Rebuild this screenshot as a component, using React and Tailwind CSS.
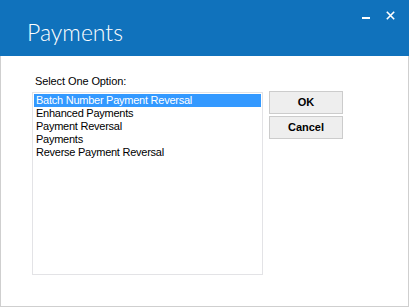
import React from "react";

const items = [
  "Batch Number Payment Reversal",
  "Enhanced Payments",
  "Payment Reversal",
  "Payments",
  "Reverse Payment Reversal",
];

export default function App() {
  return (
    <div className="w-[409px] h-[307px] bg-white flex flex-col" style={{ fontFamily: '"Liberation Sans", Arial, sans-serif' }}>
      <div className="h-[56px] bg-[#1072bc] relative shrink-0">
        <div
          className="absolute left-[27px] top-[17px] text-white text-[23px] leading-[30px] font-light"
          style={{ fontFamily: 'Lato, "Open Sans", sans-serif' }}
        >
          Payments
        </div>
        <div className="absolute left-[362px] top-[17px] w-[8px] h-[2px] bg-white" />
        <svg className="absolute left-[386px] top-[11px]" width="9" height="9" viewBox="0 0 9 9">
          <path d="M0.8 0.8 L8.2 8.2 M8.2 0.8 L0.8 8.2" stroke="white" strokeWidth="1.6" />
        </svg>
      </div>
      <div className="flex-1 border-l border-r border-b border-[#cfcfcf] relative">
        <div className="pl-[34px] pt-[19px] text-[11px] leading-[13px] text-black tracking-[-0.1px]">Select One Option:</div>
        <div className="flex pl-[31px] pt-[4px]">
          <div className="w-[231px] h-[183px] border border-[#e3e3e6] py-[1px] px-[1px]">
            {items.map((it, i) => (
              <div
                key={it}
                className={
                  "h-[13px] leading-[13px] text-[11px] pl-[2px] whitespace-nowrap tracking-[-0.25px] " +
                  (i === 0 ? "bg-[#3399ff] text-white" : "text-black")
                }
              >
                {it}
              </div>
            ))}
          </div>
          <div className="ml-[6px] flex flex-col gap-[2px] -mt-[1px]">
            <button className="w-[74px] h-[23px] bg-[#eeeeee] border border-[#cccccc] text-[11px] font-bold text-black">
              OK
            </button>
            <button className="w-[74px] h-[23px] bg-[#eeeeee] border border-[#cccccc] text-[11px] font-bold text-black">
              Cancel
            </button>
          </div>
        </div>
      </div>
    </div>
  );
}
